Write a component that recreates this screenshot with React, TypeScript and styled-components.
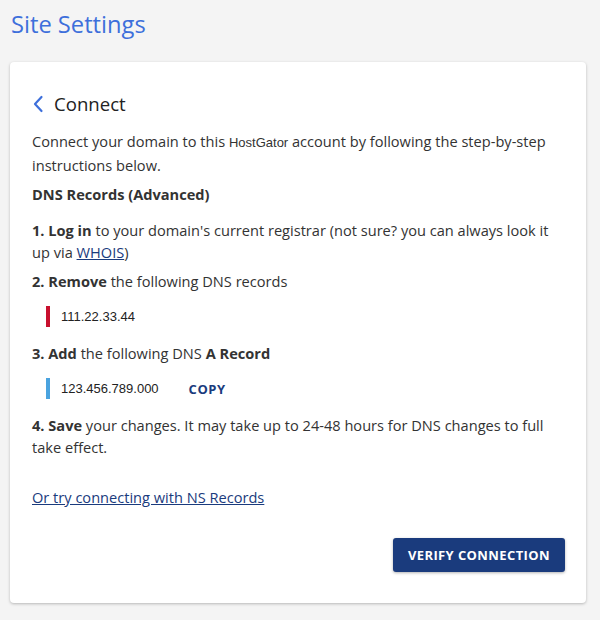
import React from 'react';
import styled, { createGlobalStyle } from 'styled-components';

const GlobalStyle = createGlobalStyle`
  body {
    margin: 0;
    background: #f4f4f4;
    font-family: "Open Sans", "Liberation Sans", sans-serif;
    color: #333;
  }
`;

const Page = styled.div`
  padding: 8px 14px 16px 10px;
`;

const Title = styled.h1`
  margin: 0 0 22px 1px;
  font-size: 23.7px;
  line-height: 32px;
  font-weight: 400;
  color: #3d6fdb;
`;

const Card = styled.div`
  background: #fff;
  border-radius: 4px;
  box-shadow: 0 1px 3px rgba(0, 0, 0, 0.25);
  padding: 29px 21px 31px 22px;
`;

const Header = styled.div`
  display: flex;
  align-items: center;
  gap: 10px;
  margin-bottom: 13px;
`;

const BackButton = styled.button`
  border: none;
  background: none;
  padding: 0;
  display: flex;
  align-items: center;
  cursor: pointer;
`;

const Heading = styled.h2`
  margin: 0;
  font-size: 18.6px;
  line-height: 26px;
  font-weight: 400;
  color: #222;
`;

const Text = styled.p<{ $gap?: number }>`
  margin: 0 0 ${(p) => p.$gap ?? 11}px 0;
  font-size: 14.6px;
  line-height: 22px;
`;

const Brand = styled.span`
  font-family: "Liberation Sans", Arial, sans-serif;
  font-size: 13px;
`;

const Strong = styled.b`
  font-weight: 700;
`;

const Link = styled.a`
  color: #1a3b7d;
  text-decoration: underline;
`;

const Record = styled.div<{ $color: string; $gap?: number }>`
  display: flex;
  align-items: center;
  gap: 30px;
  margin: 0 0 ${(p) => p.$gap ?? 15}px 14px;
  padding-left: 11px;
  border-left: 4px solid ${(p) => p.$color};
  height: 21px;
  font-family: "Liberation Sans", Arial, sans-serif;
  font-size: 13px;
  color: #222;
`;

const CopyButton = styled.button`
  border: none;
  background: none;
  padding: 0;
  font-family: "Open Sans", sans-serif;
  font-weight: 700;
  font-size: 13px;
  letter-spacing: 0.5px;
  color: #1a3b7d;
  cursor: pointer;
`;

const Footer = styled.div`
  display: flex;
  justify-content: flex-end;
  margin-top: 30px;
`;

const PrimaryButton = styled.button`
  background: #1a3b7d;
  color: #fff;
  border: none;
  border-radius: 3px;
  height: 34px;
  padding: 0 15px;
  font-family: "Open Sans", sans-serif;
  font-weight: 700;
  font-size: 13px;
  letter-spacing: 0.4px;
  box-shadow: 0 1px 3px rgba(0, 0, 0, 0.3);
  cursor: pointer;
`;

const Chevron = () => (
  <svg width="12" height="18" viewBox="0 0 12 18" fill="none">
    <path d="M9.5 2 L3 9 L9.5 16" stroke="#3d6fdb" strokeWidth="2.2" strokeLinecap="round" strokeLinejoin="round" />
  </svg>
);

const App: React.FC = () => {
  return (
    <>
      <GlobalStyle />
      <Page>
        <Title>Site Settings</Title>
        <Card>
          <Header>
            <BackButton aria-label="Back">
              <Chevron />
            </BackButton>
            <Heading>Connect</Heading>
          </Header>
          <Text $gap={7}>
            Connect your domain to this <Brand>HostGator</Brand> account by following the step-by-step
            instructions below.
          </Text>
          <Text $gap={14}>
            <Strong>DNS Records (Advanced)</Strong>
          </Text>
          <Text $gap={7}>
            <Strong>1. Log in</Strong> to your domain's current registrar (not sure? you can always look it
            up via <Link href="#">WHOIS</Link>)
          </Text>
          <Text $gap={14}>
            <Strong>2. Remove</Strong> the following DNS records
          </Text>
          <Record $color="#c8102e">111.22.33.44</Record>
          <Text $gap={14}>
            <Strong>3. Add</Strong> the following DNS <Strong>A Record</Strong>
          </Text>
          <Record $color="#4aa3df">
            123.456.789.000
            <CopyButton>COPY</CopyButton>
          </Record>
          <Text $gap={28}>
            <Strong>4. Save</Strong> your changes. It may take up to 24-48 hours for DNS changes to full
            take effect.
          </Text>
          <Text $gap={0}>
            <Link href="#">Or try connecting with NS Records</Link>
          </Text>
          <Footer>
            <PrimaryButton>VERIFY CONNECTION</PrimaryButton>
          </Footer>
        </Card>
      </Page>
    </>
  );
};

export default App;
